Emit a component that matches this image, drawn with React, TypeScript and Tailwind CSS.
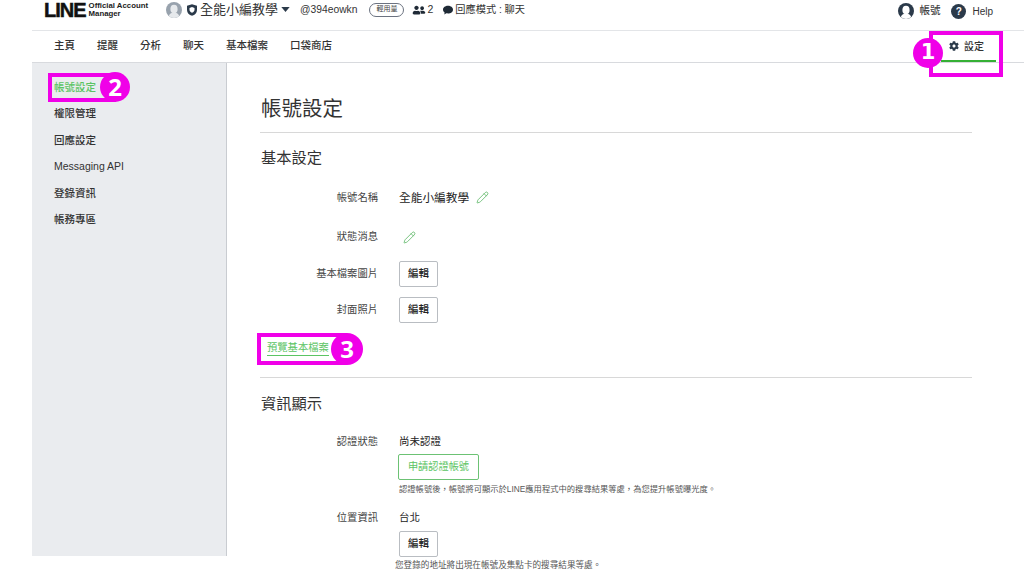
import React from "react";
import { Pencil } from "lucide-react";
import { FaCog, FaUserFriends } from "react-icons/fa";

const cjk = "font-['Liberation_Sans','Noto_Sans_CJK_TC',sans-serif]";

function Avatar({ className, dark }: { className: string; dark?: boolean }) {
  return (
    <svg viewBox="0 0 16 16" className={className}>
      <circle cx="8" cy="8" r="8" fill={dark ? "#2b3a4a" : "#98a2ad"} />
      <ellipse cx="8" cy="7" rx="3.6" ry="4.3" fill={dark ? "#ffffff" : "#e6e9ec"} />
      <path d="M2.8 14c1-2.6 3-3.4 5.2-3.4s4.2.8 5.2 3.4A8 8 0 0 1 2.8 14z" fill={dark ? "#ffffff" : "#e6e9ec"} />
    </svg>
  );
}

function EditButton() {
  return (
    <button className="w-[39px] h-[26px] bg-white border border-[#b9bdc2] rounded-[2px] text-[10.500px] font-medium text-[#222]">
      編輯
    </button>
  );
}

function Row({ label, className, children }: { label: string; className?: string; children?: React.ReactNode }) {
  return (
    <div className={`flex items-center ${className ?? ""}`}>
      <div className="w-[117px] text-right text-[10.300px] text-[#444]">{label}</div>
      <div className="ml-[21px] flex items-center">{children}</div>
    </div>
  );
}

function Badge({ n, className }: { n: string; className: string }) {
  return (
    <div className={`absolute rounded-full bg-[#f000e8] flex items-center justify-center text-white font-bold ${className}`}>
      {n}
    </div>
  );
}

export default function App() {
  const nav = ["主頁", "提醒", "分析", "聊天", "基本檔案", "口袋商店"];
  const side = ["權限管理", "回應設定", "Messaging API", "登錄資訊", "帳務專區"];
  return (
    <div className={`relative w-[1024px] h-[576px] overflow-hidden bg-white pl-[32px] ${cjk} text-[#222]`}>
      {/* top bar */}
      <div className="h-[31px] border-b border-[#e3e5e8] flex items-start pt-[1px]">
        <div className="ml-[12px] flex items-center h-[17px]">
          <span className="text-[20px] font-black leading-none tracking-[-1px] text-[#111] [-webkit-text-stroke:0.5px_#111]">LINE</span>
          <div className="ml-[3px] text-[7.800px] leading-[8px] font-bold text-[#222]">
            <div>Official Account</div>
            <div>Manager</div>
          </div>
        </div>
        <div className="ml-[18px] flex items-center h-[17px]">
          <Avatar className="w-[16px] h-[16px]" />
          <svg viewBox="0 0 12 14" className="ml-[5px] w-[10px] h-[12px]">
            <path d="M6 0l6 2v5c0 3.500-2.500 5.800-6 7-3.500-1.200-6-3.500-6-7V2z" fill="#2b3a4a" />
            <path d="M6 3.500l3 1v2.500c0 1.500-1.200 2.500-3 3.200-1.800-.7-3-1.700-3-3.200V4.500z" fill="#fff" />
          </svg>
          <span className="ml-[3px] text-[13px] text-[#333]">全能小編教學</span>
          <svg viewBox="0 0 10 6" className="ml-[3px] w-[9px] h-[5px]"><path d="M0 0h10L5 6z" fill="#2b3a4a" /></svg>
          <span className="ml-[10px] text-[10.300px] text-[#333]">@394eowkn</span>
          <span className="ml-[12px] w-[35px] h-[14px] border border-[#6b7280] rounded-full text-[7px] flex items-center justify-center text-[#444]">輕用量</span>
          <FaUserFriends className="ml-[8px] w-[14px] h-[10px] text-[#1f2a36]" />
          <span className="ml-[1px] text-[10.500px] text-[#333]">2</span>
          <svg viewBox="0 0 12 12" className="ml-[10px] w-[10px] h-[10px]">
            <path d="M6 1c3.300 0 6 2 6 4.600S9.300 10.200 6 10.200c-.7 0-1.300-.1-1.900-.2L1.500 11.500l.5-2.500C.8 8.100 0 6.900 0 5.600 0 3 2.700 1 6 1z" fill="#1f2a36" />
          </svg>
          <span className="ml-[2px] text-[10.200px] text-[#333]">回應模式 : 聊天</span>
        </div>
        <div className="ml-auto mr-[31px] flex items-center h-[20px]">
          <Avatar dark className="w-[16px] h-[16px]" />
          <span className="ml-[5px] text-[10.500px] font-medium text-[#444]">帳號</span>
          <span className="ml-[11px] w-[15px] h-[15px] rounded-full bg-[#2b3a4a] text-white text-[10px] font-bold flex items-center justify-center">?</span>
          <span className="ml-[6px] text-[10px] text-[#333]">Help</span>
        </div>
      </div>
      {/* nav */}
      <div className="h-[32px] border-b border-[#d8dade] flex items-center pb-[1px]">
        <div className="ml-[22px] flex gap-[22px] text-[10.500px] font-medium text-[#333]">
          {nav.map((n) => <span key={n}>{n}</span>)}
        </div>
        <div className="ml-auto mr-[40px] flex items-center text-[10px] font-medium text-[#333]">
          <FaCog className="w-[10px] h-[10px] text-[#2b3a4a]" />
          <span className="ml-[5px]">設定</span>
        </div>
      </div>
      {/* body */}
      <div className="flex items-start">
        <aside className="w-[195px] h-[493px] bg-[#eaecef] border-r border-[#c9ccd1] shrink-0 pl-[22px] pt-[17.500px]">
          <div className="h-[14px] flex items-center text-[10.500px] font-medium text-[#5bc463]">帳號設定</div>
          <div className="flex flex-col">
            {side.map((s) => (
              <div key={s} className="mt-[12.500px] h-[14px] flex items-center text-[10.500px] font-medium text-[#333]">{s}</div>
            ))}
          </div>
        </aside>
        <main className="w-[746px] pl-[33px] shrink-0">
          <h1 className="mt-[32px] ml-[1px] h-[28px] text-[20.500px] leading-[28px] text-[#333]">帳號設定</h1>
          <div className="mt-[9px] h-px bg-[#d8d8d8] w-[712px]" />
          <h2 className="mt-[15px] ml-[1px] h-[20px] text-[15.250px] leading-[20px] text-[#333]">基本設定</h2>
          <Row label="帳號名稱" className="mt-[21px] h-[18px] ml-[1px]">
            <span className="text-[11.700px] text-[#222]">全能小編教學</span>
            <Pencil className="ml-[7px] w-[13px] h-[13px] text-[#5bb665]" strokeWidth={1.5} />
          </Row>
          <Row label="狀態消息" className="mt-[21px] h-[18px] ml-[1px]">
            <Pencil className="ml-[4px] w-[13px] h-[13px] text-[#5bb665]" strokeWidth={1.5} />
          </Row>
          <Row label="基本檔案圖片" className="mt-[15px] ml-[1px]"><EditButton /></Row>
          <Row label="封面照片" className="mt-[10px] ml-[1px]"><EditButton /></Row>
          <div className="mt-[18px] ml-[7px] w-fit text-[10.300px] text-[#5bc463] border-b border-[#5bc463] leading-[14px]">預覽基本檔案</div>
          <div className="mt-[21px] h-px bg-[#d8d8d8] w-[712px]" />
          <h2 className="mt-[16px] ml-[1px] h-[20px] text-[15.250px] leading-[20px] text-[#333]">資訊顯示</h2>
          <Row label="認證狀態" className="mt-[20px] h-[16px] ml-[1px]">
            <span className="text-[10.500px] text-[#222]">尚未認證</span>
          </Row>
          <div className="ml-[138px] mt-[4px] w-[81px] h-[26px] border border-[#6cc274] rounded-[2px] text-[10.200px] text-[#5bc463] flex items-center justify-center">申請認證帳號</div>
          <div className="ml-[139px] mt-[3px] h-[12px] leading-[12px] text-[8.300px] text-[#555]">認證帳號後，帳號將可顯示於LINE應用程式中的搜尋結果等處，為您提升帳號曝光度。</div>
          <Row label="位置資訊" className="mt-[15px] h-[16px] ml-[1px]">
            <span className="text-[10.500px] text-[#222]">台北</span>
          </Row>
          <div className="ml-[139px] mt-[4px]"><EditButton /></div>
          <div className="ml-[135px] mt-[2px] h-[12px] leading-[12px] text-[8.600px] text-[#555]">您登錄的地址將出現在帳號及集點卡的搜尋結果等處。</div>
        </main>
      </div>

      {/* annotations */}
      <div className="absolute left-[929px] top-[31px] w-[74px] h-[46px] border-[4px] border-[#f000e8]">
        <div className="absolute left-[8px] right-[3px] top-[25px] h-[2px] bg-[#35b035]" />
      </div>
      <Badge n="1" className="left-[913px] top-[38px] w-[30px] h-[30px] text-[21px] font-['DejaVu_Sans',sans-serif]" />
      <div className="absolute left-[48px] top-[73px] w-[68px] h-[29px] border-[4px] border-[#f000e8]" />
      <Badge n="2" className="left-[100px] top-[72px] w-[30px] h-[30px] text-[24px] font-['Open_Sans',sans-serif]" />
      <div className="absolute left-[257px] top-[333px] w-[90px] h-[32px] border-[4px] border-[#f000e8]" />
      <Badge n="3" className="left-[331px] top-[333px] w-[32px] h-[32px] text-[24px] font-['Open_Sans',sans-serif]" />
    </div>
  );
}
